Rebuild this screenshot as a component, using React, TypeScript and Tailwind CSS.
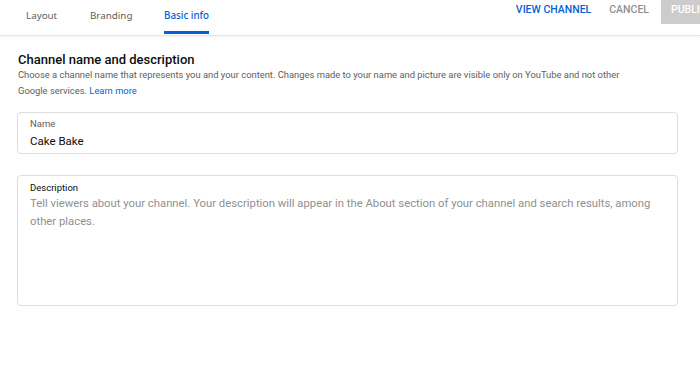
export default function App() {
  return (
    <div className="w-[700px] h-[369px] bg-white overflow-hidden font-['Roboto',sans-serif]">
      {/* Header */}
      <div className="flex h-[36px] items-start border-b border-[#e5e5e5] shadow-[0_1px_2px_rgba(0,0,0,0.06)]">
        <div className="flex pl-[26px] font-['Noto_Sans',sans-serif] text-[9.8px] leading-[14px]">
          <div className="h-[35px] w-[64px] pt-[9px] text-[#606060]">Layout</div>
          <div className="h-[35px] w-[74px] pt-[9px] text-[#606060]">Branding</div>
          <div className="h-[34px] border-b-[3px] border-[#065fd4] pt-[9px] font-medium text-[#065fd4]">Basic info</div>
        </div>
        <div className="ml-auto flex items-start overflow-hidden">
          <button className="mt-[3px] whitespace-nowrap text-[10.5px] font-medium leading-[14px] text-[#065fd4]">VIEW CHANNEL</button>
          <button className="ml-[18px] mt-[3px] whitespace-nowrap text-[10.5px] font-medium leading-[14px] text-[#909090]">CANCEL</button>
          <div className="ml-[12px] h-[24px] w-[39px] overflow-hidden whitespace-nowrap bg-[#cccccc] pl-[10px] pt-[3px] text-[10.5px] font-medium leading-[14px] text-white">PUBLISH</div>
        </div>
      </div>

      {/* Content */}
      <div className="px-[17px] pt-[17px]">
        <h2 className="pl-px text-[13px] font-medium leading-[14px] text-[#0d0d0d]">Channel name and description</h2>
        <p className="w-[620px] pl-px text-[9.4px] leading-[16px] text-[#606060]">
          Choose a channel name that represents you and your content. Changes made to your name and picture are visible only on YouTube and not other Google services.{' '}
          <span className="text-[#065fd4]">Learn more</span>
        </p>

        <div className="mt-[13px] h-[42px] w-[661px] rounded-[4px] border border-[#dedede] px-[12px] pt-[5px]">
          <div className="text-[9.5px] leading-[12px] text-[#606060]">Name</div>
          <div className="mt-[3px] text-[11.5px] leading-[16px] text-[#0d0d0d]">Cake Bake</div>
        </div>

        <div className="mt-[21px] h-[131px] w-[661px] rounded-[4px] border border-[#dedede] px-[12px] pt-[6px]">
          <div className="text-[9.5px] leading-[12px] text-[#0d0d0d]">Description</div>
          <div className="mt-px text-[11.3px] leading-[18px] text-[#909090]">
            Tell viewers about your channel. Your description will appear in the About section of your channel and search results, among other places.
          </div>
        </div>
      </div>
    </div>
  );
}
